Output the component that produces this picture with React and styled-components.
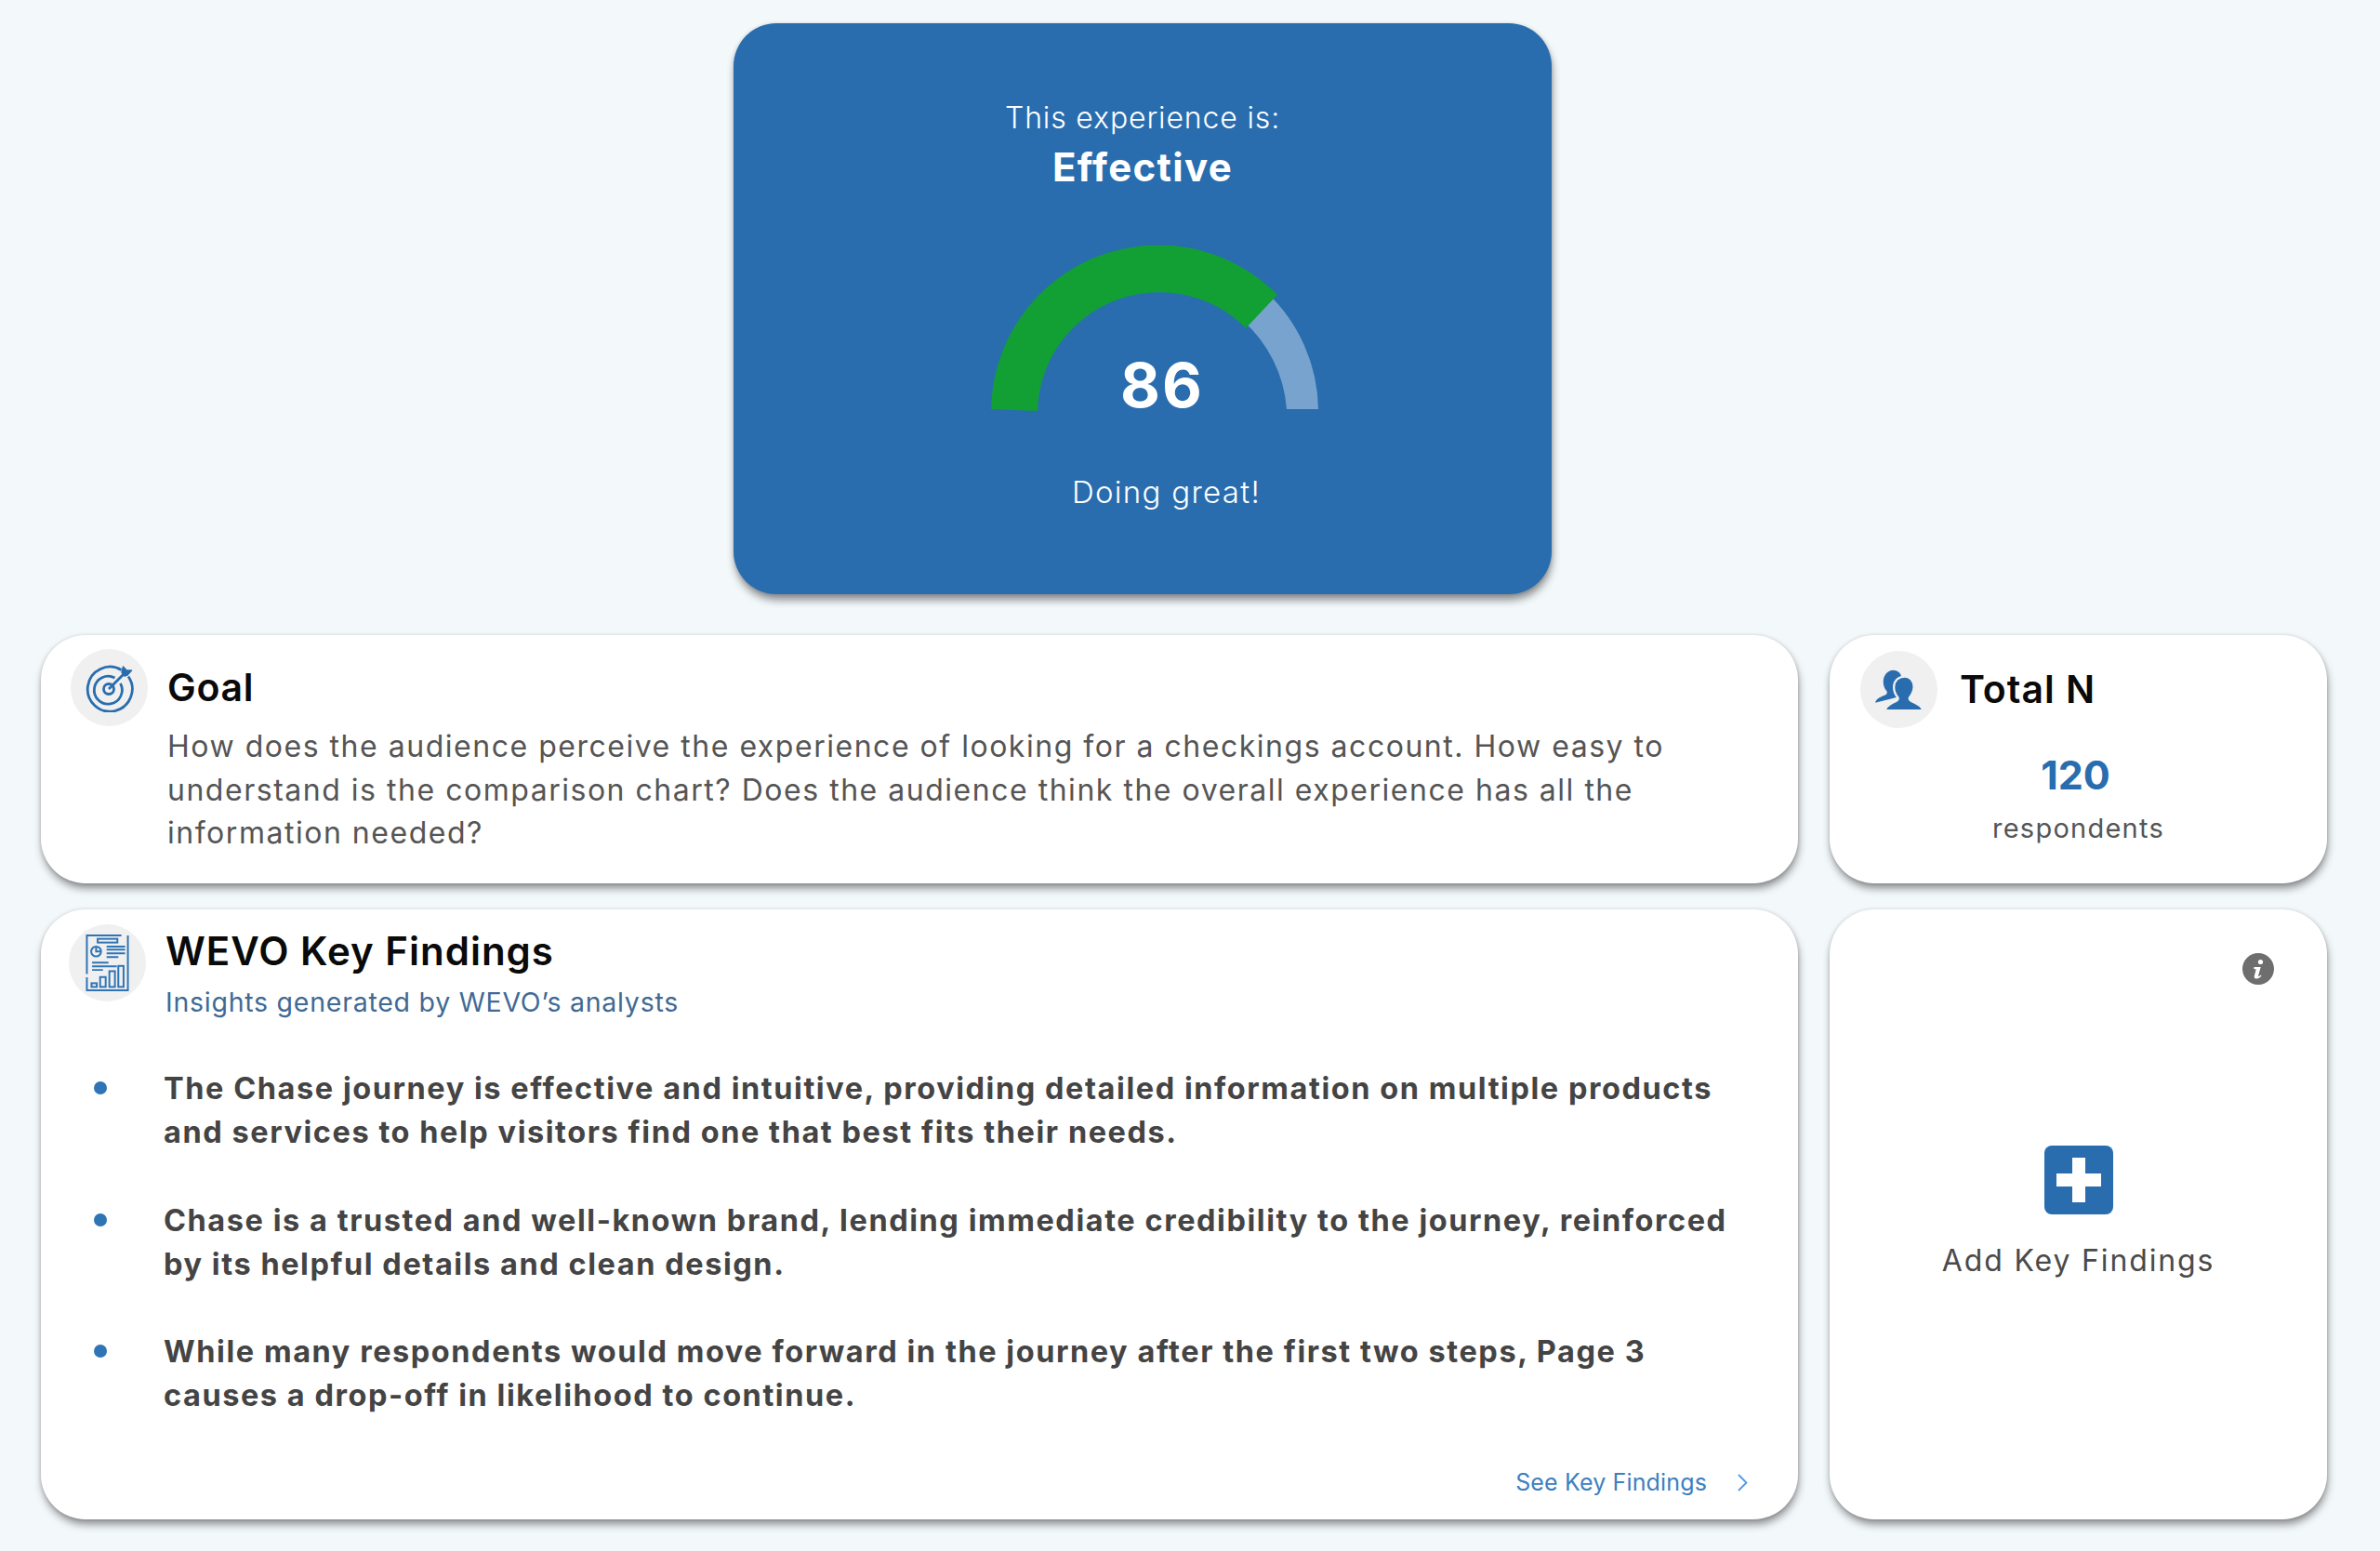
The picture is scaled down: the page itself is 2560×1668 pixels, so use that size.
import React from 'react'
import styled, { createGlobalStyle } from 'styled-components'

const Global = createGlobalStyle`
    html, body { margin:0; padding:0; background:#f3f8fb; }
    body { font-family:Inter, "Open Sans", "Liberation Sans", sans-serif; }
    * { box-sizing:border-box; }
`

const Page = styled.div`
    width:2560px;
    height:1668px;
    padding:25px 57px 0 44px;
    overflow:hidden;
`

const HeroRow = styled.div`
    padding-left:745px;
    margin-bottom:44px;
`

const Hero = styled.section`
    width:880px;
    height:614px;
    padding-top:77px;
    border-radius:46px;
    background:#296daf;
    box-shadow:1px 7px 10px -1px rgba(0,0,0,.45), 0 0 4px rgba(0,0,0,.12);
    color:#fff;
    display:flex;
    flex-direction:column;
    align-items:center;
    text-align:center;
`

const HeroLabel = styled.div`
    font-size:32px;
    font-weight:300;
    line-height:50px;
    letter-spacing:.85px;
`

const HeroValue = styled.div`
    font-size:42px;
    font-weight:700;
    line-height:56px;
    letter-spacing:1.3px;
`

const GaugeWrap = styled.div`
    position:relative;
    width:352px;
    height:178px;
    margin:56px 0 0 26px;
    svg { display:block; }
`

const Score = styled.div`
    position:absolute;
    left:139px;
    top:117px;
    font-size:66px;
    font-weight:700;
    line-height:66px;
    letter-spacing:2px;
`

const HeroNote = styled.div`
    margin:62px 0 0 51px;
    font-size:33px;
    font-weight:300;
    line-height:50px;
    letter-spacing:1.3px;
`

const Grid = styled.div`
    display:grid;
    grid-template-columns:1890px 535px;
    grid-template-rows:267px 656px;
    column-gap:34px;
    row-gap:28px;
`

const Card = styled.section`
    border-radius:48px;
    background:#fff;
    box-shadow:1px 6px 10px -1px rgba(0,0,0,.45), 0 0 4px rgba(0,0,0,.12);
`

const GoalCard = styled(Card)`
    display:grid;
    grid-template-columns:83px 1fr;
    column-gap:21px;
    padding:15px 70px 0 32px;
`

const IconCircle = styled.div`
    width:83px;
    height:83px;
    flex:none;
    border-radius:50%;
    background:#f0f0f0;
    display:flex;
    align-items:center;
    justify-content:center;
`

const GoalTitle = styled.h2`
    margin:0;
    font-size:41px;
    font-weight:600;
    line-height:82px;
    color:#0a0a0a;
    letter-spacing:.7px;
`

const GoalText = styled.p`
    margin:0;
    font-size:32px;
    line-height:46.6px;
    color:#555;
    letter-spacing:1.52px;
`

const TotalCard = styled(Card)`
    padding:17px 33px 0;
`

const Head = styled.div`
    display:flex;
    align-items:center;
    gap:24px;
`

const TotalTitle = styled.h2`
    margin:0;
    font-size:41px;
    font-weight:600;
    line-height:83px;
    color:#0a0a0a;
    letter-spacing:1px;
`

const TotalValue = styled.div`
    margin-top:20px;
    padding-right:6px;
    font-size:43px;
    font-weight:700;
    line-height:60px;
    color:#296daf;
    text-align:center;
`

const TotalLabel = styled.div`
    font-size:29px;
    line-height:56px;
    color:#555;
    text-align:center;
    letter-spacing:1.25px;
`

const FindingsCard = styled(Card)`
    display:flex;
    flex-direction:column;
    padding:16px 54px 20px 30px;
`

const FindingsHead = styled.div`
    display:flex;
    gap:21px;
`

const FindingsTitle = styled.h2`
    margin:0;
    font-size:42px;
    font-weight:600;
    line-height:58px;
    color:#0a0a0a;
    letter-spacing:1px;
`

const FindingsSub = styled.div`
    font-size:28.5px;
    line-height:52px;
    color:#3f6a94;
    letter-spacing:.75px;
`

const List = styled.ul`
    list-style:none;
    margin:43px 0 0;
    padding:0 0 0 27px;
    display:flex;
    flex-direction:column;
    gap:47.5px;
`

const Item = styled.li`
    display:grid;
    grid-template-columns:14px 1fr;
    column-gap:61px;
    font-size:32.5px;
    font-weight:700;
    line-height:47px;
    color:#444;
    letter-spacing:1.55px;
`

const Dot = styled.span`
    width:14px;
    height:14px;
    margin-top:16px;
    border-radius:50%;
    background:#2f74b5;
`

const SeeLink = styled.a`
    margin-top:auto;
    align-self:flex-end;
    display:flex;
    align-items:center;
    gap:33px;
    font-size:25px;
    line-height:40px;
    color:#3d80bf;
    letter-spacing:.15px;
`

const AddCard = styled(Card)`
    display:flex;
    flex-direction:column;
    align-items:center;
    padding:47px 57px 0;
`

const InfoButton = styled.div`
    align-self:flex-end;
    width:34px;
    height:34px;
    svg { display:block; }
`

const PlusBox = styled.div`
    position:relative;
    width:74px;
    height:74px;
    margin-top:173px;
    border-radius:8px;
    background:#296daf;

    &::before, &::after {
        content:'';
        position:absolute;
        background:#fff;
    }
    &::before { left:13px; top:30px; width:48px; height:14px; }
    &::after { left:30px; top:13px; width:14px; height:48px; }
`

const AddLabel = styled.div`
    margin-top:25px;
    font-size:32px;
    line-height:50px;
    color:#4a4a4a;
    letter-spacing:1.85px;
`

const TargetIcon = () => (
    <svg width="52" height="52" viewBox="0 0 52 52" fill="none" stroke="#296daf" strokeWidth="2.8">
        <path d="M38.5 6.5A24 24 0 1 0 46 13.5" />
        <path d="M31.5 15A15 15 0 1 0 37.5 21" />
        <circle cx="25" cy="27" r="5.5" />
        <path d="M25 27 41 11" />
        <path d="M39 9 40.5 3 44 7 49.5 7 45 12 42 13Z" fill="#296daf" strokeWidth="1.5" strokeLinejoin="round" />
    </svg>
)

const PeopleIcon = () => (
    <svg width="51" height="44" viewBox="168 150 152 130">
        <path fill="#296daf" d="M226 152c18 0 29 15 27 34-1 14-8 24-13 30l-2 22-70 18c4-14 22-20 33-25 5-3 6-7 4-12-7-8-11-18-11-30 0-21 13-37 32-37z" />
        <path fill="#296daf" stroke="#f0f0f0" strokeWidth="7" d="M262 172c19 0 31 15 30 35-1 13-7 24-13 31-3 6-1 10 6 13 14 6 32 12 36 30H199c4-17 21-24 35-30 7-3 9-7 6-13-7-8-12-19-12-32 0-20 14-34 34-34z" />
    </svg>
)

const ReportIcon = () => (
    <svg width="47" height="61" viewBox="184 117 141 184" fill="none" stroke="#2f74b5" strokeWidth="6">
        <path d="M188 245V120H300M321 120V298H188V256" />
        <rect x="223" y="131" width="64" height="12" />
        <circle cx="218" cy="172" r="16" />
        <path d="M218 156V172H234" />
        <path d="M252 156H312M252 166H312M252 178H312M252 190H290M205 208H258M205 220H285M205 232H240" />
        <rect x="203" y="275" width="17" height="12" />
        <rect x="231" y="255" width="18" height="32" />
        <rect x="261" y="236" width="18" height="51" />
        <rect x="290" y="219" width="17" height="68" />
    </svg>
)

const InfoIcon = () => (
    <svg width="34" height="34" viewBox="0 0 34 34">
        <circle cx="17" cy="17" r="17" fill="#6e6e6e" />
        <circle cx="19.5" cy="9.5" r="2.6" fill="#fff" />
        <path fill="#fff" d="M12.5 15h7.2l-2.6 9.3c-.2.8.5 1 1.2.5l1.6-1.2.6.9c-1.6 1.9-3.4 3-5.4 3-1.9 0-2.8-1-2.3-2.8l1.9-7.2-2.4-.5z" />
    </svg>
)

const Chevron = () => (
    <svg width="11" height="19" viewBox="0 0 11 19" fill="none" stroke="#4a9be8" strokeWidth="1.8">
        <path d="M1 1l8.5 8.5L1 18" />
    </svg>
)

const findings = [
    'The Chase journey is effective and intuitive, providing detailed information on multiple products and services to help visitors find one that best fits their needs.',
    'Chase is a trusted and well-known brand, lending immediate credibility to the journey, reinforced by its helpful details and clean design.',
    'While many respondents would move forward in the journey after the first two steps, Page 3 causes a drop-off in likelihood to continue.',
]

const App = () => {
    return (
        <Page>
            <Global />
            <HeroRow>
                <Hero>
                    <HeroLabel>This experience is:</HeroLabel>
                    <HeroValue>Effective</HeroValue>
                    <GaugeWrap>
                        <svg width="352" height="178" viewBox="0 0 352 178">
                            <path fill="#78a3cf" d="M296 50A176 176 0 0 1 352 176H318A142 142 0 0 0 270 80Z" />
                            <path fill="#12a035" d="M0 176A180 180 0 0 1 308 53L274 89A131 131 0 0 0 50 178Z" />
                        </svg>
                        <Score>86</Score>
                    </GaugeWrap>
                    <HeroNote>Doing great!</HeroNote>
                </Hero>
            </HeroRow>
            <Grid>
                <GoalCard>
                    <IconCircle><TargetIcon /></IconCircle>
                    <div>
                        <GoalTitle>Goal</GoalTitle>
                        <GoalText>
                            How does the audience perceive the experience of looking for a checkings account. How easy to understand is the comparison chart? Does the audience think the overall experience has all the information needed?
                        </GoalText>
                    </div>
                </GoalCard>
                <TotalCard>
                    <Head>
                        <IconCircle><PeopleIcon /></IconCircle>
                        <TotalTitle>Total N</TotalTitle>
                    </Head>
                    <TotalValue>120</TotalValue>
                    <TotalLabel>respondents</TotalLabel>
                </TotalCard>
                <FindingsCard>
                    <FindingsHead>
                        <IconCircle><ReportIcon /></IconCircle>
                        <div>
                            <FindingsTitle>WEVO Key Findings</FindingsTitle>
                            <FindingsSub>Insights generated by WEVO’s analysts</FindingsSub>
                        </div>
                    </FindingsHead>
                    <List>
                        {findings.map((text,i)=>
                            <Item key={i}>
                                <Dot />
                                <span>{text}</span>
                            </Item>
                        )}
                    </List>
                    <SeeLink>See Key Findings <Chevron /></SeeLink>
                </FindingsCard>
                <AddCard>
                    <InfoButton><InfoIcon /></InfoButton>
                    <PlusBox />
                    <AddLabel>Add Key Findings</AddLabel>
                </AddCard>
            </Grid>
        </Page>
    )
}

export default App
